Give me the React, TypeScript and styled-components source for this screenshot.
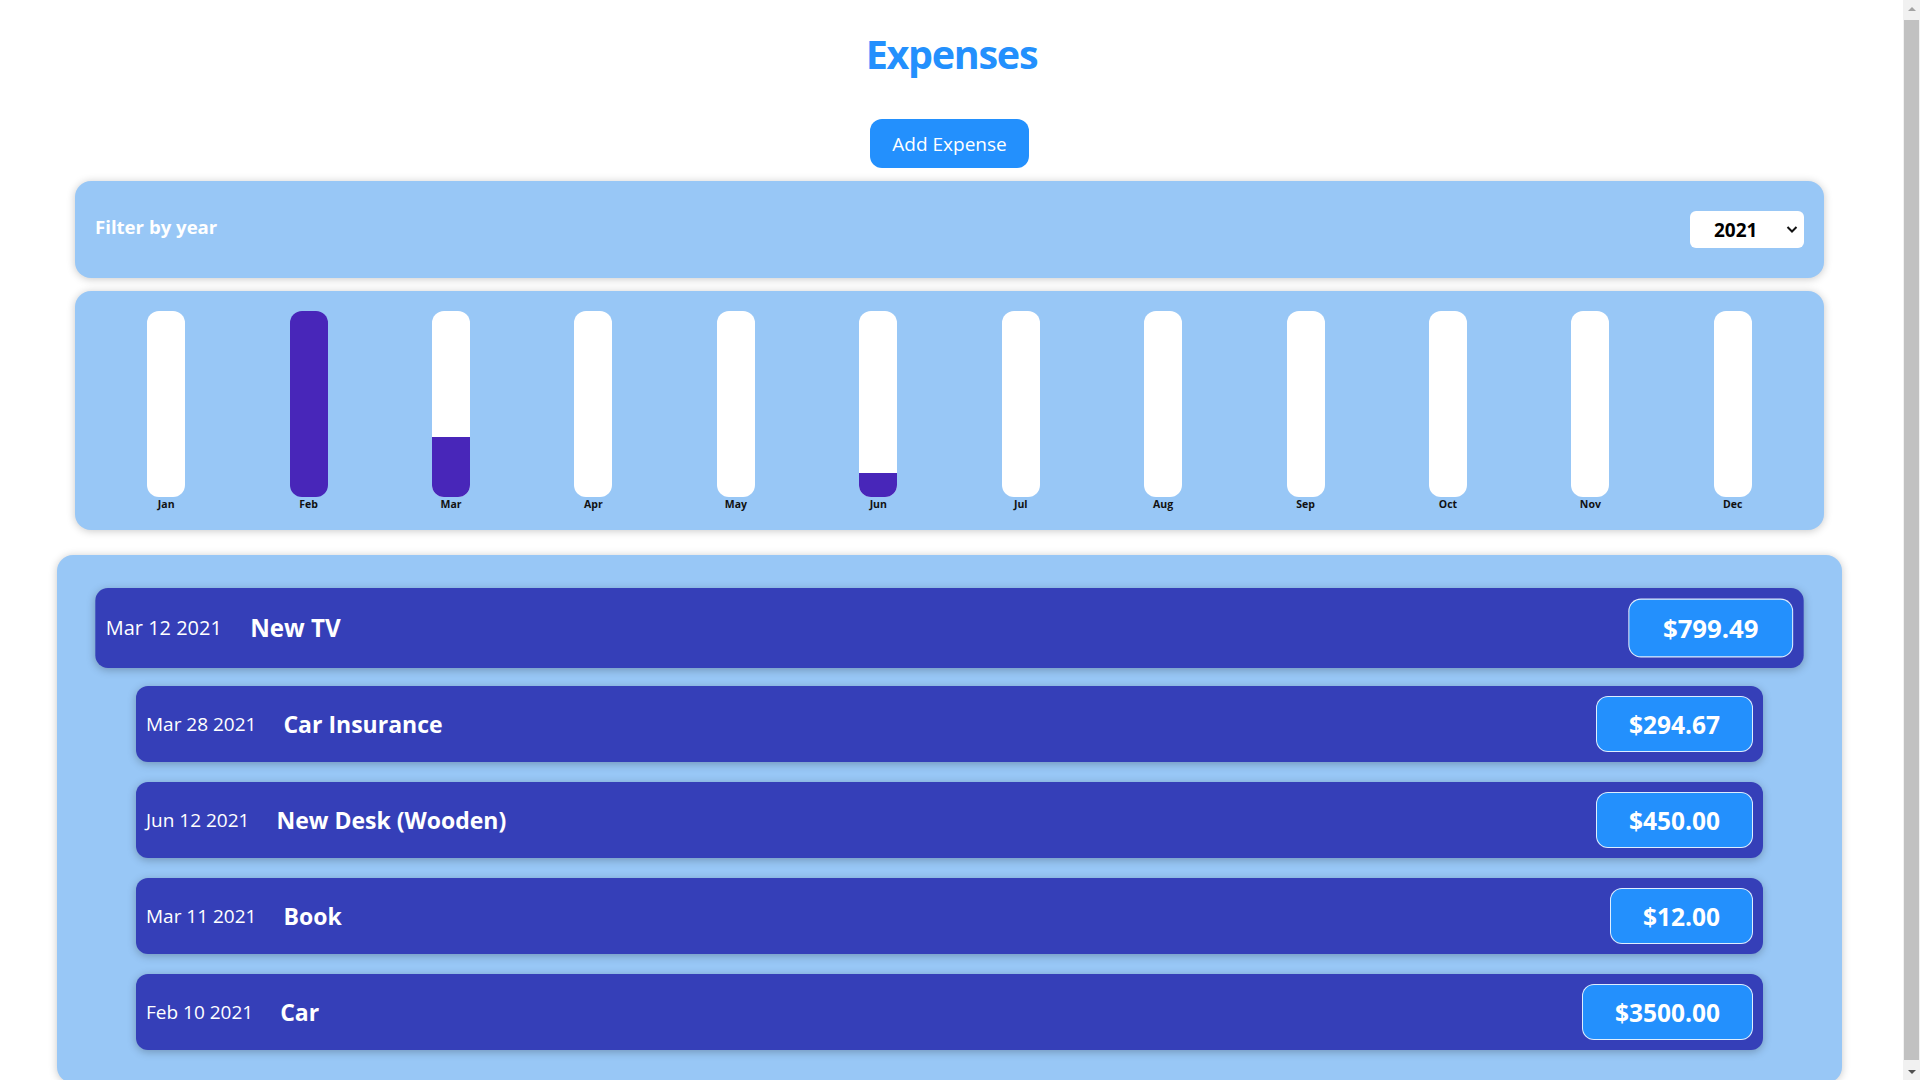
import React from "react";
import styled, { createGlobalStyle } from "styled-components";

const GlobalStyle = createGlobalStyle`
  * { box-sizing: border-box; }
  html, body { margin: 0; padding: 0; background: #ffffff; }
  body { font-family: "Open Sans", "Noto Sans", sans-serif; }
`;

const Page = styled.div`
  width: calc(100% - 17px);
  padding: 30px 4px 24px 0;
  display: flex;
  flex-direction: column;
  align-items: center;
`;

const ScrollTrack = styled.div`
  position: fixed;
  top: 0;
  right: 0;
  width: 17px;
  height: 100vh;
  background: #f1f1f1;
  display: flex;
  flex-direction: column;
  align-items: center;
`;

const ScrollArrow = styled.div<{ $down?: boolean }>`
  height: 17px;
  width: 17px;
  display: flex;
  align-items: center;
  justify-content: center;
  &::after {
    content: "";
    border-left: 4px solid transparent;
    border-right: 4px solid transparent;
    ${(p) => (p.$down ? "border-top: 4px solid #505050;" : "border-bottom: 4px solid #a3a3a3;")}
  }
`;

const ScrollThumb = styled.div`
  flex: 1;
  width: 15px;
  margin: 3px 0;
  background: #c1c1c1;
`;

const Title = styled.h1`
  margin: 0 0 0 4px;
  font-size: 39.5px;
  line-height: 48px;
  font-weight: 700;
  letter-spacing: -1.3px;
  color: #2390fd;
`;

const AddButton = styled.button`
  margin-top: 41px;
  height: 49px;
  padding: 0 22px;
  border: none;
  border-radius: 12px;
  background: #2390fd;
  color: #ffffff;
  font-family: inherit;
  font-size: 19px;
  cursor: pointer;
`;

const Panel = styled.section<{ $mt: number; $width: number; $radius: number }>`
  margin-top: ${(p) => p.$mt}px;
  width: ${(p) => p.$width}px;
  background: #98c7f6;
  border-radius: ${(p) => p.$radius}px;
  box-shadow: 0 1px 8px rgba(0, 0, 0, 0.22);
`;

const FilterBar = styled.div`
  height: 97px;
  padding: 0 20px;
  display: flex;
  align-items: center;
  justify-content: space-between;
`;

const FilterLabel = styled.label`
  color: #ffffff;
  font-weight: 700;
  font-size: 18.6px;
  margin-bottom: 6px;
`;

const SelectWrap = styled.div`
  position: relative;
  width: 114px;
  height: 37px;
`;

const YearSelect = styled.select`
  appearance: none;
  -webkit-appearance: none;
  width: 100%;
  height: 100%;
  border: none;
  border-radius: 6px;
  background: #ffffff;
  padding: 0 0 0 24px;
  font-family: inherit;
  font-weight: 700;
  font-size: 19px;
  color: #000000;
  outline: none;
`;

const Chevron = styled.svg`
  position: absolute;
  right: 6px;
  top: 14px;
  width: 12px;
  height: 9px;
  pointer-events: none;
`;

const Chart = styled.div`
  height: 239px;
  padding: 20px;
  display: grid;
  grid-template-columns: repeat(12, 1fr);
`;

const BarColumn = styled.div`
  display: flex;
  flex-direction: column;
  align-items: center;
`;

const BarTrack = styled.div`
  width: 38px;
  height: 186px;
  border-radius: 12px;
  background: #ffffff;
  overflow: hidden;
  display: flex;
  flex-direction: column;
  justify-content: flex-end;
`;

const BarFill = styled.div`
  width: 100%;
  background: #4826b9;
`;

const BarLabel = styled.div`
  margin-top: 1px;
  font-size: 10.5px;
  line-height: 13px;
  font-weight: 700;
  color: #111111;
`;

const ExpensesList = styled.ul`
  list-style: none;
  margin: 0;
  padding: 35px 79px 33px;
  display: flex;
  flex-direction: column;
  gap: 20px;
`;

const ItemRow = styled.li<{ $raised?: boolean }>`
  height: 76px;
  padding: 10px;
  border-radius: 12px;
  background: #353fb8;
  box-shadow: 0 2px 8px rgba(0, 0, 0, 0.25);
  display: flex;
  align-items: center;
  transform: ${(p) => (p.$raised ? "scale(1.05)" : "none")};
`;

const ItemDate = styled.span`
  color: #ffffff;
  font-size: 19px;
`;

const ItemTitle = styled.h2`
  flex: 1;
  margin: 0 0 0 27px;
  color: #ffffff;
  font-size: 23px;
  font-weight: 700;
`;

const Price = styled.div`
  height: 56px;
  padding: 0 32px;
  display: flex;
  align-items: center;
  border: 1px solid rgba(255, 255, 255, 0.85);
  border-radius: 12px;
  background: #2390fd;
  color: #ffffff;
  font-size: 24.5px;
  font-weight: 700;
`;

const months = ["Jan", "Feb", "Mar", "Apr", "May", "Jun", "Jul", "Aug", "Sep", "Oct", "Nov", "Dec"];

const expenses = [
  { date: "Mar 12 2021", month: 2, title: "New TV", amount: 799.49 },
  { date: "Mar 28 2021", month: 2, title: "Car Insurance", amount: 294.67 },
  { date: "Jun 12 2021", month: 5, title: "New Desk (Wooden)", amount: 450 },
  { date: "Mar 11 2021", month: 2, title: "Book", amount: 12 },
  { date: "Feb 10 2021", month: 1, title: "Car", amount: 3500 },
];

export default function App() {
  const totals = months.map((_, i) =>
    expenses.filter((e) => e.month === i).reduce((s, e) => s + e.amount, 0)
  );
  const max = Math.max(...totals);

  return (
    <>
      <GlobalStyle />
      <Page>
        <Title>Expenses</Title>
        <AddButton>Add Expense</AddButton>
        <Panel $mt={13} $width={1749} $radius={16}>
          <FilterBar>
            <FilterLabel>Filter by year</FilterLabel>
            <SelectWrap>
              <YearSelect defaultValue="2021">
                <option value="2022">2022</option>
                <option value="2021">2021</option>
                <option value="2020">2020</option>
                <option value="2019">2019</option>
              </YearSelect>
              <Chevron viewBox="0 0 12 9">
                <path d="M1.5 2 L6 6.5 L10.5 2" fill="none" stroke="#111" strokeWidth="2" />
              </Chevron>
            </SelectWrap>
          </FilterBar>
        </Panel>
        <Panel $mt={13} $width={1749} $radius={16}>
          <Chart>
            {months.map((m, i) => (
              <BarColumn key={m}>
                <BarTrack>
                  <BarFill style={{ height: `${max ? Math.round((totals[i] / max) * 100) : 0}%` }} />
                </BarTrack>
                <BarLabel>{m}</BarLabel>
              </BarColumn>
            ))}
          </Chart>
        </Panel>
        <Panel $mt={25} $width={1785} $radius={16}>
          <ExpensesList>
            {expenses.map((e, i) => (
              <ItemRow key={e.title} $raised={i === 0}>
                <ItemDate>{e.date}</ItemDate>
                <ItemTitle>{e.title}</ItemTitle>
                <Price>${e.amount.toFixed(2)}</Price>
              </ItemRow>
            ))}
          </ExpensesList>
        </Panel>
      </Page>
      <ScrollTrack aria-hidden="true">
        <ScrollArrow />
        <ScrollThumb />
        <ScrollArrow $down />
      </ScrollTrack>
    </>
  );
}
